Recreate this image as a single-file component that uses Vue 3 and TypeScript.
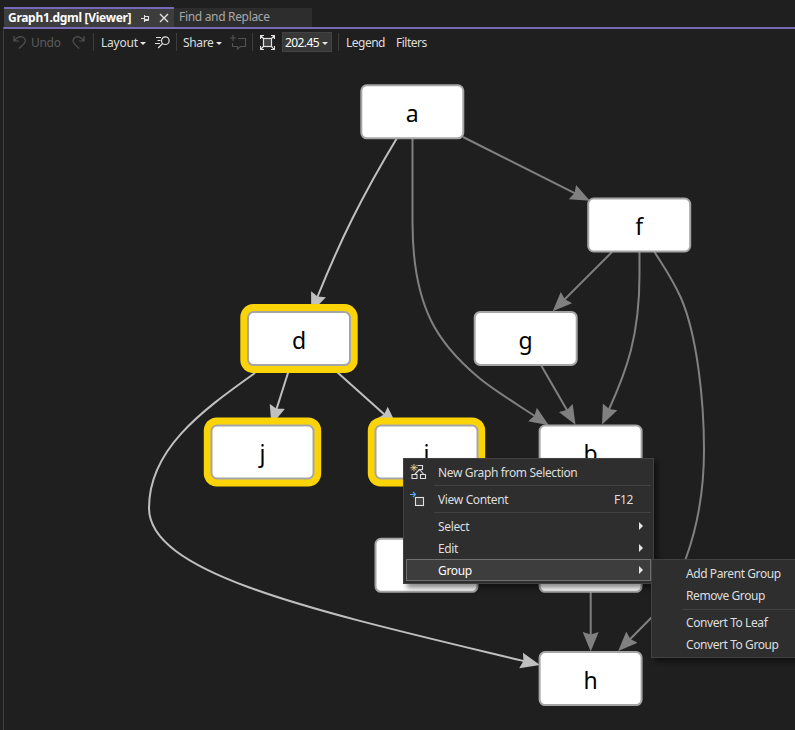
<script setup lang="ts">
interface GraphNode {
  label: string
  x: number
  y: number
  selected?: boolean
}

interface Edge {
  d: string
  lit?: boolean
}

const nodes: GraphNode[] = [
  { label: 'a', x: 412.3, y: 111.8 },
  { label: 'f', x: 639.2, y: 225 },
  { label: 'd', x: 299, y: 338.6, selected: true },
  { label: 'g', x: 525.7, y: 338.4 },
  { label: 'j', x: 262.5, y: 452, selected: true },
  { label: 'i', x: 426.5, y: 452, selected: true },
  { label: 'b', x: 590.6, y: 452 },
  { label: 'k', x: 426.5, y: 565.3 },
  { label: 'c', x: 590.6, y: 565.3 },
  { label: 'h', x: 590.6, y: 678.6 },
]

// Every path stops at the notch of its arrowhead; the marker extends past it.
const edges: Edge[] = [
  { d: 'M463 137L575.6 193.6' },
  { d: 'M412.5 138V222C412.5 310 440 345 478 377C492 389 515 403 535.4 416.4' },
  { d: 'M612 252L564 300' },
  { d: 'M639.5 252V275C639.5 335 627 370 608.7 410' },
  { d: 'M541.5 366L567.5 411' },
  { d: 'M654.5 252C664 267 672 278 681 298C697 335 704 400 704 450C704 490 698 525 686 558C675 590 665 604 651 618L629.5 639.7' },
  { d: 'M590.7 591V635.5' },
  { d: 'M397 138C362 196 340 241 317.2 297.5', lit: true },
  { d: 'M294 354L276.3 409.7', lit: true },
  { d: 'M337 372L385 415', lit: true },
  { d: 'M255 373C200 412 149 450 149 508C149 575 320 612 524.5 661.3', lit: true },
]
</script>

<template>
  <div class="window">
    <header class="tabs">
      <div class="tab active">
        <span class="tab-title">Graph1.dgml [Viewer]</span>
        <svg class="pin" width="9" height="9" viewBox="0 0 9 9">
          <path d="M0 4.5H3M3.5 1V8M3.5 2.5H7.5V6.5M3.5 5.5H7.5M3.5 6.5H7.5" />
        </svg>
        <svg class="close" width="10" height="10" viewBox="0 0 10 10">
          <path d="M1 1L9 9M9 1L1 9" />
        </svg>
      </div>
      <div class="tab"><span class="find-title">Find and Replace</span></div>
    </header>

    <main class="document">
      <nav class="toolbar">
        <div class="slot undo">
          <svg class="icon dim" width="14" height="15" viewBox="0 0 14 15">
            <path d="M1 1V6H6M1.2 5.8C3 3.5 5 1.7 7.5 1.6C10.5 1.6 12.3 3.8 12.3 6.1C12.3 8.2 10.5 9.3 6 13.5" />
          </svg>
          <span class="off">Undo</span>
        </div>
        <div class="slot redo">
          <svg class="icon dim" width="14" height="15" viewBox="0 0 14 15">
            <path d="M12 1V6H7M11.8 5.8C10 3.5 8 1.7 5.5 1.6C2.7 1.6 1 3.8 1 6.1C1 8.2 3 9.3 7 13.5" />
          </svg>
        </div>
        <div class="slot layout"><span>Layout</span><i class="caret"></i></div>
        <div class="slot search">
          <svg class="icon" width="15" height="13" viewBox="0 0 15 13">
            <circle cx="10.3" cy="4.7" r="3.8" />
            <path d="M7.6 7.5L3.2 12M1 1.5H6M2.5 4.5H5.5M0 7.5H5" />
          </svg>
        </div>
        <div class="slot share"><span>Share</span><i class="caret"></i></div>
        <div class="slot comment">
          <svg class="icon dim" width="17" height="15" viewBox="0 0 17 15">
            <path d="M3 0V6M0 3H6M8 3.5H15.5V11.5H10.5L7.5 14V11.5H2.5V8" />
          </svg>
        </div>
        <div class="slot fit">
          <svg class="icon" width="15" height="15" viewBox="0 0 15 15">
            <rect class="fit-box" x="3.5" y="3.5" width="8" height="8" />
            <path d="M1 1L4 4M14 1L11 4M1 14L4 11M14 14L11 11M.5 4V.5H4M11 .5H14.5V4M.5 11V14.5H4M11 14.5H14.5V11" />
          </svg>
        </div>
        <div class="slot zoom">
          <div class="combo"><span>202.45</span><i class="caret"></i></div>
        </div>
        <div class="slot legend"><span>Legend</span></div>
        <div class="slot filters"><span>Filters</span></div>
      </nav>
    </main>

    <svg class="graph" width="795" height="730" viewBox="0 0 795 730">
      <defs>
        <marker id="head" class="head" markerUnits="userSpaceOnUse" markerWidth="20" markerHeight="18" refX="3.5" refY="9" orient="auto">
          <path d="M0 1L19.5 9L0 17L2.4 9Z" />
        </marker>
        <marker id="head-lit" class="head-lit" markerUnits="userSpaceOnUse" markerWidth="20" markerHeight="18" refX="3.5" refY="9" orient="auto">
          <path d="M0 1L19.5 9L0 17L2.4 9Z" />
        </marker>
      </defs>
      <path
        v-for="edge in edges"
        :key="edge.d"
        :d="edge.d"
        :class="['edge', { lit: edge.lit }]"
        :marker-end="edge.lit ? 'url(#head-lit)' : 'url(#head)'"
      />
      <g v-for="node in nodes" :key="node.label" :transform="`translate(${node.x} ${node.y})`">
        <rect v-if="node.selected" class="halo" x="-58.7" y="-34.5" width="117.4" height="69" rx="13" />
        <rect class="box" x="-51" y="-26.5" width="102" height="53" rx="5.5" />
        <text class="caption" y="10.3">{{ node.label }}</text>
      </g>
    </svg>

    <div class="menu main-menu">
      <div class="item">
        <svg class="glyph" width="18" height="17" viewBox="0 0 18 17">
          <path d="M7.5 1.5H12.5V5.5H8.5M9.5 5.5L5 10M9.5 5.5L13.5 10M2 10.5H7V14.5H2ZM10.5 10.5H15.5V14.5H10.5Z" />
          <path class="spark" d="M4 0V7.4M.3 3.7H7.7M1.4 1.1L6.6 6.3M6.6 1.1L1.4 6.3" />
        </svg>
        <span>New Graph from Selection</span>
      </div>
      <hr />
      <div class="item">
        <svg class="glyph" width="18" height="17" viewBox="0 0 18 17">
          <path class="arrow" d="M0 3.5H5M3 1L5.5 3.5L3 6" />
          <rect class="content-box" x="5.5" y="6.5" width="8" height="8" />
        </svg>
        <span>View Content</span>
        <span class="shortcut">F12</span>
      </div>
      <hr />
      <div class="item"><span>Select</span><i class="more"></i></div>
      <div class="item"><span>Edit</span><i class="more"></i></div>
      <div class="item hot"><span>Group</span><i class="more"></i></div>
    </div>

    <div class="menu sub-menu">
      <div class="item"><span>Add Parent Group</span></div>
      <div class="item"><span>Remove Group</span></div>
      <hr />
      <div class="item"><span>Convert To Leaf</span></div>
      <div class="item"><span>Convert To Group</span></div>
    </div>
  </div>
</template>

<style>
body {
  margin: 0;
  background: #1f1f1f;
}
</style>

<style scoped>
.window {
  position: relative;
  width: 795px;
  height: 730px;
  overflow: hidden;
  box-sizing: border-box;
  padding: 7px 0 0 3px;
  background: #1f1f1f;
  color: #dedede;
  font: 12px/16px "Noto Sans", "Open Sans", sans-serif;
  white-space: nowrap;
}
.tabs {
  display: flex;
  align-items: flex-end;
  height: 20px;
  padding-left: 1px;
}
.tab {
  box-sizing: border-box;
  width: 138px;
  height: 19px;
  padding-left: 5px;
  padding-bottom: 1px;
  display: flex;
  align-items: center;
  background: #2d2d2d;
  color: #a8a8a8;
}
.tab.active {
  width: 170px;
  height: 20px;
  padding-left: 4px;
  padding-bottom: 0;
  border-top: 2px solid #7669b8;
  background: #3d3d3d;
  color: #fff;
  font-weight: 700;
}
.tab-title {
  width: 133px;
  letter-spacing: -0.3px;
}
.find-title {
  letter-spacing: -0.32px;
}
.pin,
.close {
  fill: none;
  stroke: #e0e0e0;
  stroke-width: 1.1;
}
.close {
  margin-left: 9px;
  stroke-width: 1.4;
}
.document {
  height: 703px;
  box-sizing: border-box;
  border-top: 2px solid #7669b8;
  border-left: 1px solid #3d3d3d;
}
.toolbar {
  display: flex;
  align-items: center;
  height: 26px;
}
.slot {
  box-sizing: border-box;
  display: flex;
  align-items: center;
  flex: none;
  height: 18px;
}
.slot span {
  padding-top: 1px;
}
.icon {
  fill: none;
  stroke: #e0e0e0;
  stroke-width: 1.2;
}
.dim {
  stroke: #515151;
}
.off {
  color: #5c5c5c;
  letter-spacing: -0.3px;
}
.fit-box {
  fill: #424242;
}
.undo {
  width: 68px;
  padding-left: 9px;
  gap: 4px;
}
.redo {
  width: 21px;
}
.layout,
.share,
.fit,
.legend {
  border-left: 1px solid #3d3d3d;
}
.layout {
  width: 62px;
  padding-left: 7px;
}
.layout span {
  width: 39px;
  letter-spacing: -0.2px;
}
.search {
  width: 21px;
}
.share {
  width: 54px;
  padding-left: 6px;
}
.share span {
  width: 33px;
  letter-spacing: -0.35px;
}
.comment {
  width: 22px;
}
.fit {
  width: 30px;
  padding-left: 7px;
}
.zoom {
  width: 56px;
}
.combo {
  box-sizing: border-box;
  display: flex;
  align-items: center;
  width: 50px;
  height: 20px;
  flex: none;
  padding-left: 2px;
  border: 1px solid #434343;
  background: #383838;
  color: #fff;
}
.combo span {
  width: 37px;
  letter-spacing: -0.6px;
}
.legend {
  width: 58px;
  padding-left: 7px;
}
.legend span {
  letter-spacing: -0.5px;
}
.filters span {
  letter-spacing: -0.5px;
}
.caret {
  width: 0;
  height: 0;
  border: 3px solid transparent;
  border-top-color: #e6e6e6;
  border-bottom: 0;
  margin-top: 2px;
}
.graph {
  position: absolute;
  left: 0;
  top: 0;
}
.edge {
  fill: none;
  stroke: #808080;
  stroke-width: 2;
}
.edge.lit {
  stroke: #c0c0c0;
}
.head {
  fill: #808080;
}
.head-lit {
  fill: #c0c0c0;
}
.halo {
  fill: #fad406;
}
.box {
  fill: #fff;
  stroke: #a5a5a5;
  stroke-width: 2;
}
.caption {
  fill: #000;
  font-size: 23px;
  text-anchor: middle;
}
.menu {
  position: absolute;
  box-sizing: border-box;
  border: 1px solid #424242;
  background: #2e2e2e;
  box-shadow: 4px 4px 5px rgba(0, 0, 0, 0.45);
  padding: 2px;
}
.main-menu {
  left: 403px;
  top: 458px;
  width: 251px;
  height: 126px;
}
.sub-menu {
  left: 651px;
  top: 559px;
  width: 160px;
  height: 99px;
  padding-top: 3px;
}
.item {
  box-sizing: border-box;
  display: flex;
  align-items: center;
  height: 22px;
  padding: 0 8px 0 32px;
  letter-spacing: -0.35px;
}
.main-menu .item span {
  padding-top: 2px;
}
.sub-menu .item {
  letter-spacing: -0.42px;
}
.item.hot {
  border: 1px solid #707070;
  background: #3d3d3d;
  color: #fff;
  padding: 0 7px 0 31px;
}
hr {
  height: 1px;
  margin: 2px 0 2px 28px;
  border: 0;
  background: #424242;
}
.glyph {
  flex: none;
  margin: 0 10px 0 -28px;
  fill: none;
  stroke: #e0e0e0;
  stroke-width: 1.1;
}
.spark {
  stroke: #edd28d;
  stroke-width: 0.9;
}
.arrow {
  stroke: #55aaff;
}
.content-box {
  fill: #424242;
}
.item .shortcut {
  margin-left: auto;
  margin-right: 10px;
}
.more {
  margin-left: auto;
  border: 4px solid transparent;
  border-left-color: #e6e6e6;
  border-right: 0;
}
</style>
